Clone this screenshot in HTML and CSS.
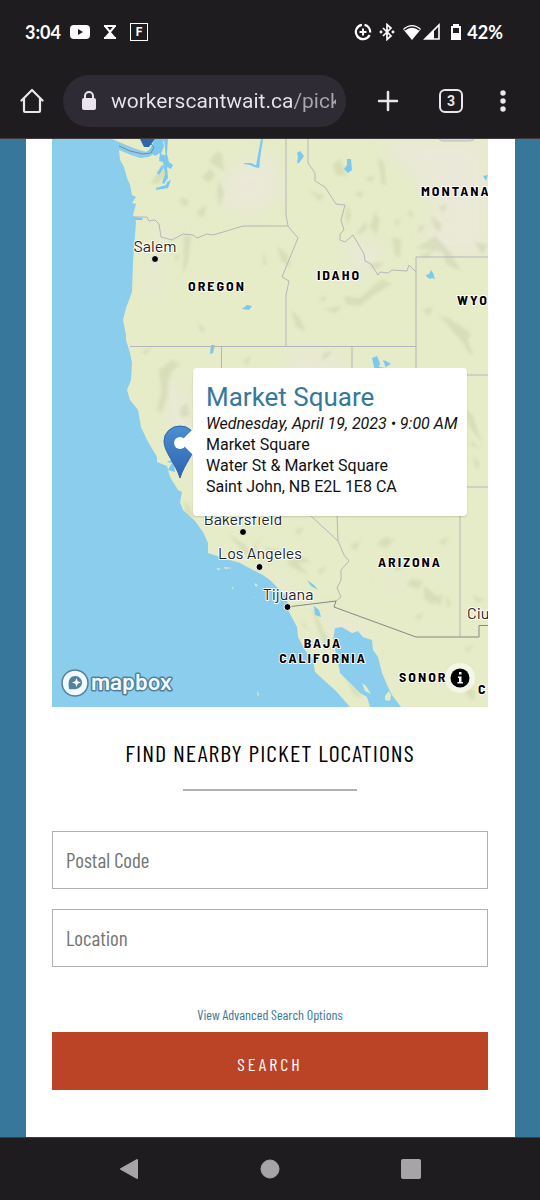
FILE: index.html
```html
<!DOCTYPE html>
<html lang="en">
<head>
<meta charset="utf-8">
<meta name="viewport" content="width=device-width, initial-scale=1">
<title>Find nearby picket locations</title>
<link rel="stylesheet" href="styles.css">
</head>
<body>
<header class="chrome">
  <div class="status">
    <div class="status-group">
      <time class="clock">3:04</time>
      <svg width="20" height="14" viewBox="0 0 20 14"><rect width="20" height="14" rx="4" fill="#fff"/><path d="M8 4l5 3-5 3z" fill="#1e1c1f"/></svg>
      <svg class="hourglass" width="14" height="14" viewBox="0 0 14 14"><path d="M1 1h12M1 13h12" stroke="#fff" stroke-width="2"/><path d="M2.500 1.500L7 7l4.500-5.500" fill="none" stroke="#fff" stroke-width="2"/><path d="M7 6l6 7H1z" fill="#fff"/></svg>
      <span class="f-badge">F</span>
    </div>
    <div class="status-group status-right">
      <svg width="18" height="18" viewBox="0 0 18 18" fill="none" stroke="#fff"><path d="M8 1.800A7.200 7.200 0 1 0 15.600 12M10.500 1.900A7.200 7.200 0 0 1 16.200 9.500" stroke-width="2.200"/><path d="M9 5.500v7M5.500 9h7" stroke-width="2"/></svg>
      <svg width="16" height="18" viewBox="0 0 16 18" fill="none" stroke="#fff" stroke-width="1.700"><path d="M4 5l8 8-4 3.500v-15L12 5l-8 8"/><circle cx="2" cy="9" r=".6"/><circle cx="14" cy="9" r=".6"/></svg>
      <svg width="41" height="18" viewBox="0 0 41 18"><path d="M1 6Q10-2 19 6L10 17z" fill="#fff"/><path d="M2.500 7Q10 1 17.500 7" fill="none" stroke="#1e1c1f" stroke-width="1.500"/><path d="M37 2v14H23z" fill="none" stroke="#fff" stroke-width="1.600"/><path d="M32 7v9h-9z" fill="#fff"/></svg>
      <svg width="12" height="18" viewBox="0 0 12 18"><path d="M3 1h6v2h2v14H1V3h2z" fill="#fff"/><path d="M3 5h6v5H3z" fill="#1e1c1f"/></svg>
      <span class="battery">42%</span>
    </div>
  </div>
  <div class="toolbar">
    <button class="icon-btn" aria-label="Home"><svg width="24" height="26" viewBox="0 0 24 26" fill="none" stroke="#ebe6ec" stroke-width="2.200" stroke-linejoin="round" stroke-linecap="round"><path d="M1.500 12.500L12 2l10.500 10.500M4 10.500V23q0 1 1 1h14q1 0 1-1V10.500"/></svg></button>
    <div class="address">
      <svg width="16" height="20" viewBox="0 0 16 20"><rect x="1" y="7" width="14" height="12" rx="2" fill="#e9e4ed"/><path d="M4 8V5a4 4 0 0 1 8 0v3" fill="none" stroke="#e9e4ed" stroke-width="2"/></svg>
      <input class="url" type="text" aria-label="Address" value="workerscantwait.ca/pick" readonly>
    </div>
    <div class="tools">
      <button class="icon-btn" aria-label="New tab"><svg width="22" height="22" viewBox="0 0 22 22" stroke="#ebe6ec" stroke-width="2.500" stroke-linecap="round"><path d="M11 2v18M2 11h18"/></svg></button>
      <button class="tabs" aria-label="3 open tabs">3</button>
      <button class="icon-btn" aria-label="Menu"><svg width="8" height="22" viewBox="0 0 8 22" fill="#ebe6ec"><circle cx="4" cy="3" r="2.700"/><circle cx="4" cy="11" r="2.700"/><circle cx="4" cy="19" r="2.700"/></svg></button>
    </div>
  </div>
</header>

<main class="page">
  <div class="card">
    <section class="map" aria-label="Picket map">
      <svg class="map-art" viewBox="52 139 436 568" preserveAspectRatio="xMidYMid slice">
        <defs>
          <linearGradient id="pin" x1="0" y1="0" x2="0" y2="1"><stop offset="0" stop-color="#4b8fd2"/><stop offset="1" stop-color="#2d64b0"/></linearGradient>
          <filter id="soft" x="-30%" y="-30%" width="160%" height="160%"><feGaussianBlur stdDeviation="9"/></filter>
          <filter id="relief"><feGaussianBlur stdDeviation="1.500"/></filter>
          <clipPath id="coast"><path id="land" d="M119 150L120 160 124 167 127 178 130 185 132 195 136 197 132 203 136 204 133 215 136 222 135 235 133 262 132 292 126 308 123 320 126 335 126 340 130 353 132 363 131 380 127 390 130 400 138 410 141 427 147 440 157 457 157 462 167 466 170 477 178 490 182 492 180 502 183 510 195 521 203 532 208 543 208 553 223 558 240 563 253 570 263 575 270 580 287 597 288 610 297 627 298 637 305 650 313 660 315 672 327 683 336 691 350 707H370L367 697 360 693 350 683 340 673 337 657 333 640 335 628 342 627 352 633 358 631 363 637 372 640 373 650 378 657 382 673 388 687 392 695 401 707H488V139H165L157 151 149 157 140 158 131 155z"/></clipPath>
        </defs>
        <path fill="#8bcdec" d="M52 139h436v568H52z"/>
        <use href="#land" fill="#e5ecc7"/>
        <path fill="#e5ecc7" d="M112 139h45l-3 7-8 6-10-3-10-4z"/>
        <g clip-path="url(#coast)">
          <g fill="#ece8dc" opacity=".8" filter="url(#soft)">
            <path d="M230 165l42-15 12 45-30 20-35-6zM375 139h113v90l-50-15-25-38zM422 220h66v35h-64zM342 245l32-7 9 28-28 12zM147 255h12v46l-12-5zM164 375l20 10 6 54-18 6zM150 225h23v14h-24zM285 350l60 5v20h-60zM325 605l42 26 8 22-44-18zM245 568l42 14 18 20-20-5zM391 570l19 13-12 8-17-10z"/>
          </g>
          <g fill="#c8cfa6" opacity=".45" filter="url(#relief)">
            <path d="M154 178l10-14 2 12-9 8-6-1zM202 177l8-8 5 6-6 8zM209 162l9-11 4 4 2 16-8-5zM180 198l9 2-3 7-6-4zM199 210l7-5-2 12-7-2zM219 180l5 14-5 12-2-14zM184 234l7 3-3 25-5 12zM175 254l4 2-2 8zM263 251l4 13-4 1zM198 323l7 6-4 4z"/>
            <path d="M159 370l13-10 8 4-9 8-3 10-1 16-6 15-4-4 5-19-2-10zM140 352l11-4-4 6zM244 360l7-4-4 10zM322 354l10-4-2 5-7 6zM180 410l7-7 3 12-8 3z"/>
            <path d="M277 246l10 8 4 14-10-7zM291 310l9 8 6 14-10-5zM310 191l15 5-6 5zM333 164l7-5 7 17-11-1zM378 158l6 5 2 23-4-2zM348 203l3 13-4 9-2-9zM375 212l5 8-4 15-6-8zM357 233l9-12 1 8-8 6zM394 221l6-2-3 8zM407 214l4-4 2 8zM431 216l11 8-2 8-6-4zM438 207l9-3-3 8zM416 248l19-12 16 17 10 18-15-7-3-12zM343 296l17 2 12-11 10-8 10 5-17 10-15 12-13-1zM318 299l9-3-3 6zM323 309l20-3-8 7zM369 267l6-5 9 1-8 6zM392 237l9 2-1 19-5-3zM417 228l8-4-4 9zM474 242l14 3-6 9zM439 315l11 4 20 13-4 14-11-12zM422 310l11-3-4 9zM419 255l14-4-5 7zM365 178l9-2-2 6zM354 194l9-3-2 7z"/>
            <path d="M458 330l7 4 9 22-7-5zM465 408l8 8 9 27-13-16zM473 455l7 9-4 6zM462 337l9-2-5 7zM470 440l11 9-10-3zM377 544l8-7 9 3-8 8zM390 561l16 4-9 6zM411 579l12 3-5 7-11-4zM424 586l13 10-4 9-9-7zM350 545l10-4-4 10zM432 599l11-5-3 12zM446 595l5 8-4 5zM464 650l9-6-4 8zM447 676l9 12-7-4zM473 595l11 5-7 3zM415 616l9-3-5 7zM439 541l9-4-4 9zM466 685l10 8-3 8-8-9z"/>
            <path d="M228 534l17 11 5 7 13-17-8 14 7 11-14-3zM286 562l14-6 11 6-13 1 11 12-16-7zM264 546l21 7-13 2zM311 605l7 14 8 17 7 15-9-6-8-22zM345 676l9 11 9 11-9-3zM184 500l6 8 4 12-8-6zM295 530l9-3-5 9zM318 570l8-4-5 9zM302 620l7 10-6-4z"/>
          </g>
        </g>
        <g class="water">
          <path d="M155 139l7 0 2 7-3 8 6 2-1 4 7 5-2 4-4-2 1 11-4 6-2-1 3-9-2-12-4-1 1-8-5 3-6-5zM164 139l4 0-1 15 2 8-3-2zM157 173l5-8 2 2-5 8zM156 188l10-3 1-3 4-2-3 8-12 2zM134 217l9 1-1 2-8 0z"/>
          <path d="M261 139h2l-2 13-2 15-3-1 2-11zM244 163l7 0 4 2 5-1-1 4-5-1-4-2-6-1zM242 309l5-4 5 1-3 4zM211 345h4l-2 8-3 1zM297 153l3-2 4 5-2 3-3 4h-2l1-6zM347 159l4 0 1 11-4 3-4-4 3-4zM483 176l5-1-2 6zM431 270l2 3 2 6-3-1-2 1-3-2-1-2 3-1zM372 358l5-2 3 7-1 4 7 1-3-8 3 1 5 3-5 3-3 4h-8zM307 580l7 5 4 5-7-4zM314 606l5 4 2 7-6-2zM167 462l10-5-3 5 1 10-7-2 4-7z"/>
        </g>
        <g fill="#e4ecc5">
          <path d="M217 568l5 1-5 1zM224 567l8 1-7 1zM254 583l4 2-2 2zM254 597l1 0 0 1zM232 587l2 1-2 1zM257 691l2 3-1 3zM362 683l4 3 5 8-6-3zM385 696l4-5 2 4-1 6-5-1z"/>
        </g>
        <g class="border">
          <path d="M133 217H147L149 221 155 220 159 224 161 237 172 240 183 234 193 235 197 238 207 234 213 235 243 226H288M286 139V215L288 226 298 238 282 277 289 281 286 295V346M308 139V163L315 173V181L325 187 336 204 345 205 341 220 344 230 340 234V240L345 242 353 235 364 254 365 261 371 264 378 275 380 272 388 273 392 270 407 271 409 265 416 272M488 257H416V375H488M130 346.500H416M221.500 347V432L311 516 338 541 344 555 349 561 341 570V580L337 588 341 597 336 601M352 347V487H488M460 487V637M416 375V487M338 541L336 487"/>
          <path class="national" d="M287 607L336 601 334 607 416 637H479V625.500H488M119 146L130 151 143 154 151 153 154 147 151 144"/>
        </g>
        <path d="M140 139h15l-6 8-5 0z" fill="#3265a7"/>
        <path d="M438 138q2 3 6 3h25q5 0 6-3" fill="#dcdcd0" stroke="#bbb" />
        <g class="place">
          <text x="155" y="252">Salem</text><text x="243" y="525">Bakersfield</text><text x="260" y="559">Los Angeles</text><text x="288" y="600">Tijuana</text><text x="467" y="619" class="start">Ciu</text>
        </g>
        <g stroke="#fff" stroke-width="1"><circle cx="155" cy="259" r="3.500"/><circle cx="243" cy="532" r="3.500"/><circle cx="259.500" cy="567" r="3.500"/><circle cx="287.500" cy="607" r="3.500"/></g>
        <g class="region">
          <text x="217" y="291">OREGON</text><text x="339" y="280">IDAHO</text><text x="421" y="196" class="start">MONTANA</text><text x="457" y="305" class="start">WYO</text><text x="410" y="567">ARIZONA</text><text x="323" y="648">BAJA</text><text x="323" y="663">CALIFORNIA</text><text x="399" y="682" class="start">SONOR</text><text x="478" y="694" class="start">C</text>
        </g>
        <path d="M180 478C176 464 164 452 164 441a16 15 0 0 1 32 0c0 11-12 23-16 37z" fill="url(#pin)" stroke="#2c62a8"/>
        <circle cx="180" cy="443" r="6" fill="#fff"/>
      </svg>
      <article class="popup">
        <h2><a href="#market-square">Market Square</a></h2>
        <p><em>Wednesday, April 19, 2023 • 9:00 AM</em></p>
        <p>Market Square</p>
        <p>Water St &amp; Market Square</p>
        <p>Saint John, NB E2L 1E8 CA</p>
      </article>
      <a class="mapbox" href="#mapbox" aria-label="Mapbox">
        <svg width="124" height="36" viewBox="0 0 124 36"><circle cx="15" cy="18" r="13" fill="#f2faff" stroke="#51819c" stroke-width="1.500"/><path d="M9 24C7.500 15 10 11 15.500 11a6.500 6.500 0 0 1 6.500 6.500c0 6-6.500 7.500-13 6.500z" fill="#51819c"/><path d="M16.500 13l1.200 3.200 3.300 1.300-3.300 1.300-1.200 3.200-1.200-3.200-3.300-1.300 3.300-1.300z" fill="#fff"/><text x="31" y="25">mapbox</text></svg>
      </a>
      <button class="info" aria-label="Map attribution"><svg width="20" height="20" viewBox="0 0 20 20"><circle cx="10" cy="10" r="9.500"/><path d="M8 8.500h3.500V14H13v1.500H7.500V14H9v-4H8zM9 4h2.500v2.500H9z" fill="#fff"/></svg></button>
    </section>

    <form class="search">
      <h1>FIND NEARBY PICKET LOCATIONS</h1>
      <hr>
      <input class="field" type="text" aria-label="Postal Code" placeholder="Postal Code">
      <input class="field" type="text" aria-label="Location" placeholder="Location">
      <a class="advanced" href="#advanced">View Advanced Search Options</a>
      <button class="submit" type="button">SEARCH</button>
    </form>
  </div>
</main>

<nav class="system-nav" aria-label="System">
  <button aria-label="Back"><svg width="22" height="24" viewBox="0 0 22 24"><path d="M19 3v18L3 12z" stroke-width="2" stroke-linejoin="round"/></svg></button>
  <button aria-label="Home screen"><svg width="22" height="24" viewBox="0 0 22 24"><circle cx="11" cy="12" r="9"/></svg></button>
  <button aria-label="Recent apps"><svg width="22" height="24" viewBox="0 0 22 24"><rect x="1.500" y="2.500" width="19" height="19" rx="1"/></svg></button>
</nav>
</body>
</html>
```
FILE: styles.css
```css
* { box-sizing: border-box; }
body {
  margin: 0;
  min-height: 100vh;
  display: flex;
  flex-direction: column;
  background: #1e1c1f;
  font-family: Roboto, sans-serif;
}
h1, h2, p { margin: 0; font-weight: 400; }
button { border: 0; padding: 0; background: none; font: inherit; }
svg { display: block; }
a { text-decoration: none; }

/* Browser chrome */
.chrome { color: #fff; }
.status {
  display: flex;
  justify-content: space-between;
  align-items: center;
  height: 64px;
  padding: 0 37px 0 25px;
}
.status-group { display: flex; align-items: center; gap: 9px; }
.status-right { gap: 7px; }
.clock, .battery { font: 700 18px Lato, sans-serif; }
.battery { margin-left: -2px; }
.hourglass { margin: 0 4px; }
.f-badge {
  width: 18px;
  height: 18px;
  border: 1px solid #fff;
  font: 700 12px/16px Roboto, sans-serif;
  text-align: center;
}
.toolbar {
  display: flex;
  align-items: center;
  height: 75px;
  padding: 0 33px 0 20px;
  gap: 19px;
  border-bottom: 1px solid #3d3b3e;
}
.address {
  flex: 1;
  min-width: 0;
  display: flex;
  align-items: center;
  gap: 14px;
  height: 52px;
  padding: 0 10px 0 18px;
  border-radius: 26px;
  background: #2e2b34;
}
.url {
  flex: 1;
  min-width: 0;
  height: 32px;
  padding: 0;
  border: 0;
  outline: 0;
  font: 400 21px Roboto, sans-serif;
  color: transparent;
  background: linear-gradient(to right, #e9e4ed 182px, #aaa5b0 182px);
  -webkit-background-clip: text;
  background-clip: text;
}
.tools { display: flex; align-items: center; gap: 40px; padding-left: 12px; }
.tabs {
  width: 24px;
  height: 24px;
  border: 2px solid #ebe6ec;
  border-radius: 6px;
  color: #ebe6ec;
  font: 700 14px/20px Roboto, sans-serif;
}
.tools .icon-btn:last-child { margin-left: -4px; }

/* Page */
.page { flex: 1; display: flex; padding: 0 25px 0 26px; background: #37779a; }
.card { flex: 1; min-width: 0; padding: 0 27px 0 26px; background: #fff; }
.map { position: relative; overflow: hidden; }
.map-art { width: 100%; height: auto; }
.water { fill: #7cc8ee; }
.border { fill: none; stroke: #b5b6bb; stroke-width: 1; }
.national { stroke: #85878d; }
.place, .region { text-anchor: middle; paint-order: stroke; stroke: #fff; stroke-width: 2; stroke-linejoin: round; }
.place { font: 400 16px Barlow, "Noto Sans", sans-serif; fill: #222; }
.region { font: 700 14px "Barlow Semi Condensed", Barlow, Roboto, sans-serif; letter-spacing: 2px; fill: #000; }
.start { text-anchor: start; }

.popup {
  position: absolute;
  top: 229px;
  left: 141px;
  width: 274px;
  height: 148px;
  padding: 13px;
  border-radius: 4px;
  background: #fff;
  box-shadow: 0 1px 2px #0002;
  color: #111;
  font-size: 16px;
  line-height: 21px;
  white-space: nowrap;
}
.popup::before {
  content: "";
  position: absolute;
  top: 61px;
  left: -13px;
  border: 13px solid transparent;
  border-left: 0;
  border-right-color: #fff;
}
.popup h2 { font-size: 26px; line-height: 32px; }
.popup a, .advanced { color: #37779a; }
.mapbox { position: absolute; left: 8px; bottom: 6px; }
.mapbox text {
  font: 600 23px Barlow, Inter, sans-serif;
  fill: #f2faff;
  stroke: #51819c;
  stroke-width: 3;
  stroke-linejoin: round;
  paint-order: stroke;
}
.info {
  position: absolute;
  right: 13px;
  bottom: 14px;
  padding: 5px;
  border-radius: 50%;
  background: #ffffff90;
}

/* Search form */
.search {
  display: flex;
  flex-direction: column;
  align-items: center;
  padding: 31px 0 46px;
  font-family: "Barlow Condensed", "Roboto Condensed", "Liberation Sans Narrow", Roboto, sans-serif;
}
.search h1 { font-size: 24px; line-height: 30px; letter-spacing: 1px; white-space: nowrap; }
.search hr { width: 40%; margin: 21px 0 40px; border: 0; border-top: 2px solid #b0b0b0; }
.field {
  width: 100%;
  height: 58px;
  margin-bottom: 20px;
  padding: 0 13px 2px;
  border: 1px solid #b0b0b0;
  border-radius: 0;
  background: #fff;
  font: inherit;
  font-size: 21px;
}
.field::placeholder { color: #757575; opacity: 1; }
.advanced { margin-top: 18px; font-size: 14px; line-height: 20px; }
.submit {
  width: 100%;
  height: 58px;
  margin-top: 7px;
  padding-top: 5px;
  background: #bb4427;
  color: #fff;
  font-size: 18px;
  letter-spacing: 3px;
}

.system-nav {
  display: flex;
  justify-content: center;
  align-items: center;
  gap: 22%;
  height: 63px;
  border-top: 1px solid #3d3b3e;
  fill: #a6a4a6;
  stroke: #a6a4a6;
}
```
